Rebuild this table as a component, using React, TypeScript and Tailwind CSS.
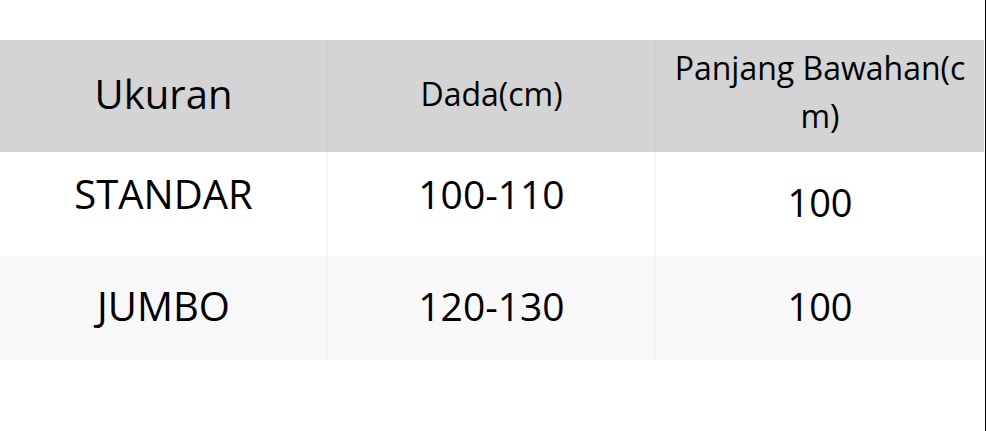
const rows = [
  { size: "STANDAR", dada: "100-110", panjang: "100", lift: true, bg: "bg-white" },
  { size: "JUMBO", dada: "120-130", panjang: "100", lift: false, bg: "bg-[#f8f8f8]" },
];

const App = () => {
  return (
    <div className="flex h-[431px] w-[986px] bg-white text-black" style={{ fontFamily: '"Open Sans", sans-serif' }}>
      <div className="w-[984px] pt-10">
        {/* header */}
        <div className="grid h-[112px] grid-cols-[328px_328px_328px] bg-[#d4d4d4]">
          <div className="flex items-center justify-center border-r border-[#cbcbcb] pb-1 text-[40px]">Ukuran</div>
          <div className="flex items-center justify-center border-r border-[#cecece] pb-1 text-[32px]">Dada(cm)</div>
          <div className="flex items-center justify-center pb-2 text-center text-[32px] leading-[48px]">
            Panjang Bawahan(c<br />m)
          </div>
        </div>

        {rows.map((r) => (
          <div key={r.size} className={`grid h-[104px] grid-cols-[328px_328px_328px] ${r.bg}`}>
            <div className={`flex items-center justify-center border-r border-[#f1f1f1] text-[40px] ${r.lift ? "pb-5" : "pb-1"}`}>
              {r.size}
            </div>
            <div className={`flex items-center justify-center border-r border-[#f1f1f1] text-[39px] ${r.lift ? "pb-5" : "pb-1"}`}>
              {r.dada}
            </div>
            <div className="flex items-center justify-center pb-1 text-[38px]">{r.panjang}</div>
          </div>
        ))}
      </div>
      <div className="w-px" />
      <div className="h-full w-px bg-black" />
    </div>
  );
};

export default App;
